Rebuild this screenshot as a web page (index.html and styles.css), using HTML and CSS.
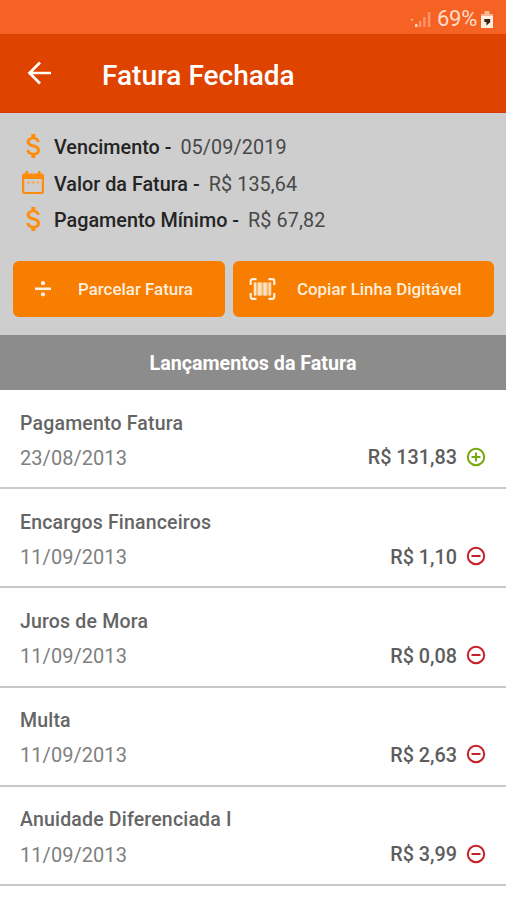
FILE: index.html
```html
<!DOCTYPE html>
<html lang="pt-BR">
<head>
<meta charset="utf-8">
<title>Fatura Fechada</title>
<link rel="stylesheet" href="styles.css">
</head>
<body>
<svg class="defs" width="0" height="0" aria-hidden="true">
  <symbol id="dollar" viewBox="0 0 24 24"><path d="M11.8 10.9c-2.27-.59-3-1.2-3-2.15 0-1.09 1.01-1.85 2.7-1.85 1.78 0 2.44.85 2.5 2.1h2.21c-.07-1.72-1.12-3.3-3.21-3.81V3h-3v2.16c-1.94.42-3.5 1.68-3.5 3.61 0 2.31 1.91 3.46 4.7 4.13 2.5.6 3 1.48 3 2.41 0 .69-.49 1.79-2.7 1.79-2.06 0-2.87-.92-2.98-2.1h-2.2c.12 2.19 1.76 3.42 3.68 3.83V21h3v-2.15c1.95-.37 3.5-1.5 3.5-3.55 0-2.84-2.43-3.81-4.7-4.4z"/></symbol>
  <symbol id="plus" viewBox="0 0 20 20"><circle cx="10" cy="10" r="8.2"/><path d="M5.5 10h9M10 5.5v9"/></symbol>
  <symbol id="minus" viewBox="0 0 20 20"><circle cx="10" cy="10" r="8.2"/><path d="M5.5 10h9"/></symbol>
</svg>

<div class="status">
  <svg class="signal" viewBox="0 0 22 18"><path class="dot" d="M1 9h1.6v1.6H1z"/><path class="on" d="M5 14h2.6v3H5z"/><path class="off" d="M9 11h2.4v6H9zM13.2 7h2.4v10h-2.4zM17.8 2h2.6v15h-2.6z"/></svg>
  <span class="percent">69%</span>
  <svg class="battery" viewBox="0 0 12 17"><path class="tip" d="M3.5 0h5v3H12v3H0V3h3.5z"/><path class="cell" d="M0 5h12v12H0z"/><path class="bolt" d="M3.3 8h5.9v3.2L5.4 14.6V11H3.3z"/></svg>
</div>

<header class="appbar">
  <svg class="back" viewBox="0 0 24 24"><path d="M24 12H2.5M13 1.5L2.5 12 13 22.5"/></svg>
  <h1>Fatura Fechada</h1>
</header>

<section class="summary">
  <div class="info"><svg class="info-icon"><use href="#dollar"/></svg><b>Vencimento -</b><span>05/09/2019</span></div>
  <div class="info"><svg class="info-icon calendar" viewBox="0 0 22 24"><path fill-rule="evenodd" d="M3.5 0H6v2.5h10V0h2.5v2.5h1.2A2.3 2.3 0 0 1 22 4.8v16a2.3 2.3 0 0 1-2.3 2.3H2.3A2.3 2.3 0 0 1 0 20.8v-16a2.3 2.3 0 0 1 2.3-2.3h1.2zM2.2 8v13h17.6V8z"/><path class="days" d="M5 10.5h2.6v2H5zm4.7 0h2.6v2H9.7zm4.7 0H17v2h-2.6z"/></svg><b>Valor da Fatura -</b><span>R$ 135,64</span></div>
  <div class="info"><svg class="info-icon"><use href="#dollar"/></svg><b>Pagamento Mínimo -</b><span>R$ 67,82</span></div>
  <div class="actions">
    <button class="btn split"><svg viewBox="0 0 16 16"><path d="M0 6.5h16v2.6H0z"/><circle cx="8" cy="2.2" r="2.1"/><circle cx="8" cy="13.3" r="2.1"/></svg><span>Parcelar Fatura</span></button>
    <button class="btn copy"><svg viewBox="0 0 26 22"><path class="frame" d="M7 1.2H3.2a2 2 0 0 0-2 2V7M19 1.2h3.8a2 2 0 0 1 2 2V7M7 20.8H3.2a2 2 0 0 1-2-2V15M19 20.8h3.8a2 2 0 0 0 2-2V15"/><path class="bars-soft" d="M4 4.5h18v13H4z"/><path class="bars" d="M4.5 4.5h2v13h-2zM8.5 4.5H12v13H8.500zM14 4.5h3v13h-3zM19.3 4.5h2v13h-2z"/></svg><span>Copiar Linha Digitável</span></button>
  </div>
</section>

<h2 class="section-title">Lançamentos da Fatura</h2>

<ul class="entries">
  <li><h3>Pagamento Fatura</h3><div class="row"><time>23/08/2013</time><strong>R$ 131,83</strong><svg class="sign credit"><use href="#plus"/></svg></div></li>
  <li><h3>Encargos Financeiros</h3><div class="row"><time>11/09/2013</time><strong>R$ 1,10</strong><svg class="sign debit"><use href="#minus"/></svg></div></li>
  <li><h3>Juros de Mora</h3><div class="row"><time>11/09/2013</time><strong>R$ 0,08</strong><svg class="sign debit"><use href="#minus"/></svg></div></li>
  <li><h3>Multa</h3><div class="row"><time>11/09/2013</time><strong>R$ 2,63</strong><svg class="sign debit"><use href="#minus"/></svg></div></li>
  <li><h3>Anuidade Diferenciada I</h3><div class="row"><time>11/09/2013</time><strong>R$ 3,99</strong><svg class="sign debit"><use href="#minus"/></svg></div></li>
</ul>
</body>
</html>
```
FILE: styles.css
```css
* { box-sizing: border-box; margin: 0; padding: 0; }
body { width: 506px; height: 900px; overflow: hidden; background: #fff; font-family: Roboto, sans-serif; }
.defs { display: block; height: 0; }
svg { flex: none; }

.status { height: 34px; background: #f66224; display: flex; align-items: center; justify-content: flex-end; padding: 4px 13px 0 0; }
.signal { width: 22px; height: 18px; margin-right: 5px; }
.signal .dot, .signal .on { fill: #ffd0b2; }
.signal .off { fill: #fa9468; }
.percent { font-size: 22px; line-height: 30px; color: #ffdcc8; letter-spacing: -.3px; margin-right: 4px; }
.battery { width: 12px; height: 17px; }
.battery .tip { fill: #fab795; }
.battery .cell { fill: #fff0df; }
.battery .bolt { fill: #38241b; }

.appbar { height: 79px; background: #df4300; display: flex; align-items: center; padding-left: 27px; border-bottom: 1px solid #d43b08; }
.back { width: 24px; height: 24px; margin-right: 51px; }
.back path { fill: none; stroke: #fff; stroke-width: 2.7; }
.appbar h1 { font-size: 28px; font-weight: 500; line-height: 32px; color: #fff; padding-top: 5px; }

.summary { height: 222px; background: #cecece; padding: 16px 12px 0 13px; }
.info { height: 36.5px; display: flex; align-items: center; padding-left: 6px; font-size: 19.8px; line-height: 24px; color: #484848; }
.info-icon { width: 32px; height: 32px; fill: #ff8c0b; margin: -2px 4px 0 -1px; }
.info-icon.calendar { width: 22px; height: 24px; margin: -2px 10px 0 3px; }
.calendar .days { fill: #f7a94f; }
.info b, .info span { padding-top: 2px; }
.info b { font-weight: 500; color: #242424; margin-right: 9px; }
.info span { letter-spacing: .1px; }
.actions { display: flex; gap: 8px; margin-top: 22px; }
.btn { display: flex; align-items: center; height: 56px; border: 0; border-radius: 6px; background: #f77e00; color: #ffeedd; font: 500 16.9px/24px Roboto, sans-serif; }
.btn svg { fill: #fff0df; }
.split { width: 212px; padding-left: 22px; }
.split svg { width: 16px; height: 16px; margin-right: 27px; }
.copy { width: 261px; padding-left: 16px; }
.copy svg { width: 27px; height: 22px; margin-right: 21px; }
.copy .frame { fill: none; stroke: #fff0df; stroke-width: 2.2; }
.copy .bars-soft { fill: #fbb365; }
.copy .bars { fill: #ffe3c6; }

.section-title { height: 55px; background: #8c8c8c; color: #fff; font-size: 19.7px; font-weight: 700; line-height: 57px; text-align: center; }

.entries { list-style: none; }
.entries li { height: 99.2px; border-bottom: 2px solid #c8c8c8; padding: 18.6px 20px 0; }
.entries h3 { font-size: 19.5px; font-weight: 500; line-height: 30px; color: #656565; letter-spacing: .18px; }
.row { display: flex; align-items: center; height: 30px; margin-top: 4.2px; }
.row time { flex: 1; font-size: 20px; line-height: 24px; color: #808080; letter-spacing: .05px; }
.row strong { font-size: 19.8px; line-height: 24px; font-weight: 500; color: #5d5d5d; margin-right: 9px; padding-top: 1.4px; }
.sign { width: 20px; height: 20px; margin-top: -2px; fill: none; stroke-width: 2; }
.credit { stroke: #76a80c; }
.debit { stroke: #c71f27; }
```
